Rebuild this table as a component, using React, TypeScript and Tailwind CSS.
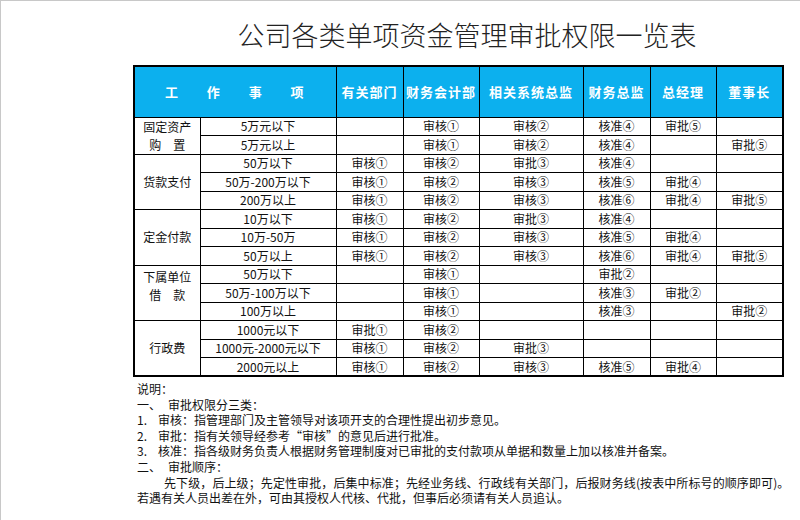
import React from "react";

type Row = { sub: string; c: string[] };

const groups: { name: React.ReactNode; top?: boolean; rows: Row[] }[] = [
  {
    name: (
      <>
        固定资产
        <br />
        购　置
      </>
    ),
    rows: [
      { sub: "5万元以下", c: ["", "审核①", "审核②", "核准④", "审批⑤", ""] },
      { sub: "5万元以上", c: ["", "审核①", "审核②", "核准④", "", "审批⑤"] },
    ],
  },
  {
    name: "货款支付",
    rows: [
      { sub: "50万以下", c: ["审核①", "审核②", "审批③", "核准④", "", ""] },
      { sub: "50万-200万以下", c: ["审核①", "审核②", "审核③", "核准⑤", "审批④", ""] },
      { sub: "200万以上", c: ["审核①", "审核②", "审核③", "核准⑥", "审批④", "审批⑤"] },
    ],
  },
  {
    name: "定金付款",
    rows: [
      { sub: "10万以下", c: ["审核①", "审核②", "审批③", "核准④", "", ""] },
      { sub: "10万-50万", c: ["审核①", "审核②", "审核③", "核准⑤", "审批④", ""] },
      { sub: "50万以上", c: ["审核①", "审核②", "审核③", "核准⑥", "审批④", "审批⑤"] },
    ],
  },
  {
    name: (
      <>
        下属单位
        <br />
        借　款
      </>
    ),
    top: true,
    rows: [
      { sub: "50万以下", c: ["", "审核①", "", "审批②", "", ""] },
      { sub: "50万-100万以下", c: ["", "审核①", "", "核准③", "审批②", ""] },
      { sub: "100万以上", c: ["", "审核①", "", "核准③", "", "审批②"] },
    ],
  },
  {
    name: "行政费",
    rows: [
      { sub: "1000元以下", c: ["审批①", "审核②", "", "", "", ""] },
      { sub: "1000元-2000元以下", c: ["审核①", "审核②", "审批③", "", "", ""] },
      { sub: "2000元以上", c: ["审核①", "审核②", "审核③", "核准⑤", "审批④", ""] },
    ],
  },
];

const headers = ["有关部门", "财务会计部", "相关系统总监", "财务总监", "总经理", "董事长"];
const widths = [66, 136, 67, 76, 104, 67, 66, 67];

const font = { fontFamily: '"Noto Sans CJK SC", "Noto Sans", sans-serif' };

export default function App() {
  return (
    <div
      lang="zh-CN"
      className="w-[800px] h-[520px] bg-white border-t border-l border-[#c8c8c8] text-[#111] overflow-hidden"
      style={font}
    >
      <div className="ml-[132px] w-[650px] pl-[18px] pt-[16px] text-center text-[27px] leading-[36px] text-[#222] font-light">
        公司各类单项资金管理审批权限一览表
      </div>
      <table className="ml-[132px] mt-[12px] border-collapse border-2 border-black table-fixed w-[649px]">
        <colgroup>
          {widths.map((w, i) => (
            <col key={i} style={{ width: w }} />
          ))}
        </colgroup>
        <thead>
          <tr className="h-[51px] bg-[#0cb0ee] text-white text-[13px] font-bold">
            <th colSpan={2} className="border border-black p-0">
              <div className="flex justify-between pl-[30px] pr-[32px]">
                <span>工</span>
                <span>作</span>
                <span>事</span>
                <span>项</span>
              </div>
            </th>
            {headers.map((h) => (
              <th key={h} className="border border-black p-0 tracking-[1px] font-bold">
                {h}
              </th>
            ))}
          </tr>
        </thead>
        <tbody className="text-[12px]">
          {groups.map((g, gi) =>
            g.rows.map((r, ri) => (
              <tr key={`${gi}-${ri}`} className="h-[18.5px] leading-[16px]">
                {ri === 0 && (
                  <td
                    rowSpan={g.rows.length}
                    className={`border border-black p-0 text-center leading-[18px] ${
                      g.top ? "align-top pt-[2px]" : "align-middle"
                    }`}
                  >
                    {g.name}
                  </td>
                )}
                <td className="border border-black p-0 text-center">{r.sub}</td>
                {r.c.map((v, ci) => (
                  <td key={ci} className="border border-black p-0 text-center">
                    {v}
                  </td>
                ))}
              </tr>
            ))
          )}
        </tbody>
      </table>
      <div className="ml-[136px] mt-[4px] text-[12px] leading-[15.6px] text-[#111]">
        <div>说明：</div>
        <div className="flex">
          <span className="w-[31px]">一、</span>
          <span>审批权限分三类：</span>
        </div>
        <div className="flex">
          <span className="w-[21px]">1.</span>
          <span>审核：指管理部门及主管领导对该项开支的合理性提出初步意见。</span>
        </div>
        <div className="flex">
          <span className="w-[21px]">2.</span>
          <span>
            审批：指有关领导经参考<span className="[font-feature-settings:'fwid']">“</span>审核
            <span className="[font-feature-settings:'fwid']">”</span>的意见后进行批准。
          </span>
        </div>
        <div className="flex">
          <span className="w-[21px]">3.</span>
          <span>核准：指各级财务负责人根据财务管理制度对已审批的支付款项从单据和数量上加以核准并备案。</span>
        </div>
        <div className="flex">
          <span className="w-[31px]">二、</span>
          <span>审批顺序：</span>
        </div>
        <div className="pl-[27px] whitespace-nowrap tracking-[0.1px]">
          先下级，后上级；先定性审批，后集中标准；先经业务线、行政线有关部门，后报财务线(按表中所标号的顺序即可)。
        </div>
        <div className="whitespace-nowrap">
          若遇有关人员出差在外，可由其授权人代核、代批，但事后必须请有关人员追认。
        </div>
      </div>
    </div>
  );
}
